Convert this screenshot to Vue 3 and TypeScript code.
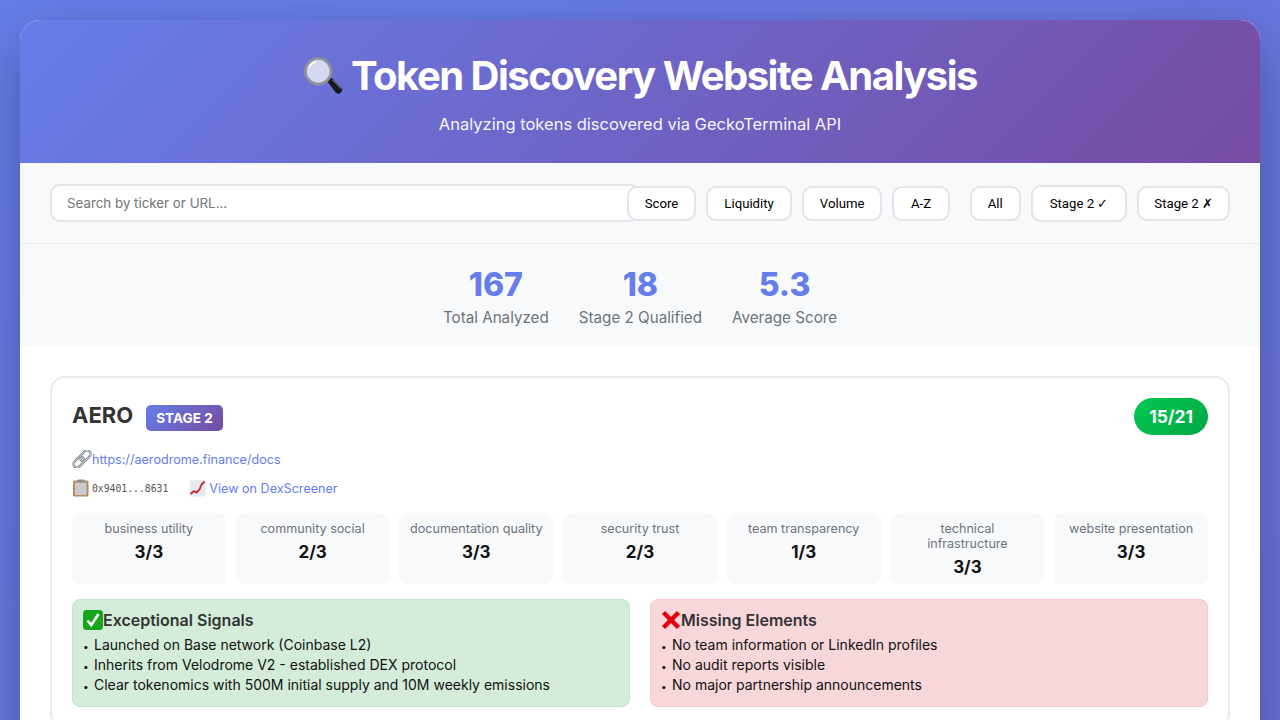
<script setup lang="ts">
const sorts = ['Score', 'Liquidity', 'Volume', 'A-Z']
const filters = ['All', 'Stage 2 ✓', 'Stage 2 ✗']
const stats = [
  { value: '167', label: 'Total Analyzed' },
  { value: '18', label: 'Stage 2 Qualified' },
  { value: '5.3', label: 'Average Score' }
]
const metrics = [
  { label: 'business utility', score: '3/3' },
  { label: 'community social', score: '2/3' },
  { label: 'documentation quality', score: '3/3' },
  { label: 'security trust', score: '2/3' },
  { label: 'team transparency', score: '1/3' },
  { label: 'technical infrastructure', score: '3/3' },
  { label: 'website presentation', score: '3/3' }
]
const signals = [
  'Launched on Base network (Coinbase L2)',
  'Inherits from Velodrome V2 - established DEX protocol',
  'Clear tokenomics with 500M initial supply and 10M weekly emissions'
]
const missing = [
  'No team information or LinkedIn profiles',
  'No audit reports visible',
  'No major partnership announcements'
]
</script>

<template>
  <div class="page">
    <div class="container">
      <header class="header">
        <h1>
          <svg class="emoji-title" viewBox="0 0 42 42" aria-hidden="true">
            <path d="M25 26l4-4 11 11c1.500 1.500 1.500 3 .5 4.500l-1.500 1.500c-1.500 1-3 1-4.500-.5z" fill="#16181c" />
            <path d="M31 25l9 9" stroke="#5b6068" stroke-width="1.500" fill="none" />
            <circle cx="16" cy="16" r="13.500" fill="#d5d8f0" stroke="#8e9299" stroke-width="3" />
            <path d="M6 13a11 11 0 0 1 8-7" stroke="#fff" stroke-width="1.500" fill="none" />
          </svg>
          Token Discovery Website Analysis
        </h1>
        <p>Analyzing tokens discovered via GeckoTerminal API</p>
      </header>

      <div class="controls">
        <input class="search" type="text" placeholder="Search by ticker or URL..." />
        <div class="group">
          <button v-for="s in sorts" :key="s" class="btn">{{ s }}</button>
        </div>
        <div class="group">
          <button v-for="f in filters" :key="f" class="btn" :class="{ active: f === 'Stage 2 ✓' }">{{ f }}</button>
        </div>
      </div>

      <div class="stats">
        <div v-for="s in stats" :key="s.label" class="stat">
          <div class="stat-value">{{ s.value }}</div>
          <div class="stat-label">{{ s.label }}</div>
        </div>
      </div>

      <div class="list">
        <div class="card">
          <div class="card-head">
            <div class="ticker">
              <h2>AERO</h2>
              <span class="stage">STAGE 2</span>
            </div>
            <span class="score">15/21</span>
          </div>

          <div class="url">
            <svg class="emoji" viewBox="0 0 20 18" aria-hidden="true">
              <g fill="none" transform="rotate(-45 10 9)">
                <rect x="-0.500" y="5.500" width="12" height="7" rx="3.500" stroke="#7d8590" stroke-width="2.400" />
                <rect x="-0.500" y="5.500" width="12" height="7" rx="3.500" stroke="#dfe3e8" stroke-width="0.800" />
                <rect x="8.500" y="5.500" width="12" height="7" rx="3.500" stroke="#7d8590" stroke-width="2.400" />
                <rect x="8.500" y="5.500" width="12" height="7" rx="3.500" stroke="#dfe3e8" stroke-width="0.800" />
              </g>
            </svg>
            <a href="#">https://aerodrome.finance/docs</a>
          </div>

          <div class="links">
            <span class="contract">
              <svg class="emoji" viewBox="0 0 20 18" aria-hidden="true">
                <rect x="1" y="1.500" width="15.500" height="16" rx="1.500" fill="#b98a5a" />
                <rect x="3" y="3.500" width="11.500" height="12.500" fill="#c9cacb" />
                <rect x="5" y="0.500" width="7.500" height="3" rx="1" fill="#8d9094" />
              </svg>
              <code>0x9401...8631</code>
            </span>
            <span class="dex">
              <svg class="emoji" viewBox="0 0 20 18" aria-hidden="true">
                <rect x="0.500" y="1" width="16" height="16.500" rx="1.500" fill="#e6e9ee" />
                <path d="M1.500 15l3.500-3 2.500 1.500 3-3 2-5 3-3" stroke="#c9242b" stroke-width="1.800" fill="none" />
              </svg>
              <a href="#">View on DexScreener</a>
            </span>
          </div>

          <div class="metrics">
            <div v-for="m in metrics" :key="m.label" class="metric">
              <div class="metric-label">{{ m.label }}</div>
              <div class="metric-score">{{ m.score }}</div>
            </div>
          </div>

          <div class="signals">
            <div class="box good">
              <h3>
                <svg class="emoji-h" viewBox="0 0 20 20" aria-hidden="true">
                  <rect width="20" height="20" rx="3.500" fill="#16a51c" />
                  <path d="M4.500 10.500l3.800 4.500 7.200-11" stroke="#fff" stroke-width="2.600" fill="none" />
                </svg>Exceptional Signals
              </h3>
              <ul>
                <li v-for="t in signals" :key="t">{{ t }}</li>
              </ul>
            </div>
            <div class="box bad">
              <h3>
                <svg class="emoji-h" viewBox="0 0 20 20" aria-hidden="true">
                  <path d="M2.500 2.500l15 15M17.500 2.500l-15 15" stroke="#e3000f" stroke-width="4.500" fill="none" />
                </svg>Missing Elements
              </h3>
              <ul>
                <li v-for="t in missing" :key="t">{{ t }}</li>
              </ul>
            </div>
          </div>
        </div>
      </div>
    </div>
  </div>
</template>

<style>
html,
body {
  margin: 0;
  overflow: hidden;
}
</style>

<style scoped>
.page {
  height: 720px;
  overflow: hidden;
  box-sizing: border-box;
  padding: 20px;
  background: linear-gradient(135deg, #667eea 0%, #764ba2 100%);
  background-size: 1280px 8000px;
  font-family: Inter, 'Liberation Sans', sans-serif;
  color: #333;
}
.container {
  border-radius: 20px;
  background: #fff;
  box-shadow: 0 20px 60px rgba(0, 0, 0, 0.3);
  overflow: hidden;
  min-height: 800px;
}
.header {
  background: linear-gradient(135deg, #667eea 0%, #764ba2 100%);
  color: #fff;
  text-align: center;
  padding: 30px;
  height: 143px;
  box-sizing: border-box;
}
.header h1 {
  margin: 0 0 11px;
  font-size: 40px;
  line-height: 52px;
  font-weight: 750;
  letter-spacing: -1.5px;
}
.emoji-title {
  width: 40px;
  height: 40px;
  vertical-align: -6px;
}
.header p {
  margin: 0;
  font-size: 16.500px;
  line-height: 22px;
  opacity: 0.95;
}
.controls {
  display: flex;
  align-items: center;
  padding: 20px 30px;
  height: 81px;
  box-sizing: border-box;
  background: #f8f9fa;
  border-bottom: 1px solid #e9ecef;
}
.search {
  width: 590px;
  height: 38px;
  box-sizing: border-box;
  margin-right: -13px;
  padding: 0 15px;
  border: 2px solid #e1e4e8;
  border-radius: 10px;
  background: #fff;
  font-family: inherit;
  font-size: 13.330px;
  outline: none;
}
.search::placeholder {
  color: #757575;
}
.group {
  display: flex;
  align-items: center;
  gap: 10px;
  margin-right: 20px;
  position: relative;
}
.group:last-child {
  margin-right: 0;
}
.btn {
  height: 35px;
  padding: 0 16px;
  border: 2px solid #e1e4e8;
  border-radius: 10px;
  background: #fff;
  color: #000;
  font-family: Roboto, sans-serif;
  font-size: 13.200px;
  white-space: nowrap;
}
.group:first-of-type .btn:last-child {
  padding: 0 16.500px;
}
.group:last-child .btn:last-child {
  padding: 0 15px;
}
.btn.active {
  height: 37px;
  padding: 0 17px;
}
.stats {
  display: flex;
  justify-content: center;
  gap: 30px;
  height: 102px;
  padding-top: 21px;
  box-sizing: border-box;
  background: #f8f9fa;
}
.stat {
  text-align: center;
}
.stat-value {
  font-size: 32px;
  line-height: 39px;
  font-weight: 800;
  color: #667eea;
}
.stat-label {
  font-size: 15.200px;
  line-height: 28px;
  color: #6c757d;
}
.list {
  padding: 30px;
}
.card {
  border: 2px solid #e9ecef;
  border-radius: 15px;
  padding: 20px;
  background: #fff;
}
.card-head {
  display: flex;
  justify-content: space-between;
  align-items: center;
  margin-bottom: 14px;
}
.ticker {
  display: flex;
  align-items: center;
  gap: 13px;
  padding-top: 2px;
}
.ticker h2 {
  margin: 0 0 6px;
  font-size: 22px;
  line-height: 28px;
  font-weight: 700;
}
.stage {
  padding: 0 10px;
  height: 26px;
  line-height: 26px;
  border-radius: 5px;
  background: linear-gradient(135deg, #667eea 0%, #764ba2 100%);
  color: #fff;
  font-size: 13.600px;
  font-weight: 700;
}
.score {
  height: 37px;
  line-height: 37px;
  padding: 0 15px;
  border-radius: 20px;
  background: linear-gradient(135deg, #00c851, #00a844);
  color: #fff;
  font-size: 17.400px;
  font-weight: 700;
}
.url {
  display: flex;
  align-items: center;
  height: 20px;
  margin-bottom: 9px;
  font-size: 12.600px;
}
.url a,
.dex a {
  color: #667eea;
  text-decoration: none;
}
.emoji {
  width: 20px;
  height: 18px;
  flex: none;
}
.links {
  display: flex;
  align-items: center;
  gap: 21px;
  height: 20px;
  margin-bottom: 15px;
  font-size: 12.600px;
}
.contract,
.dex {
  display: flex;
  align-items: center;
}
code {
  font-family: 'DejaVu Sans Mono', monospace;
  font-size: 9.750px;
  color: #555;
}
.metrics {
  display: grid;
  grid-template-columns: repeat(7, 1fr);
  gap: 10px;
  margin-bottom: 15px;
}
.metric {
  padding: 8px 8px 6px;
  border-radius: 8px;
  background: #f8f9fa;
  text-align: center;
}
.metric-label {
  font-size: 12.600px;
  line-height: 15px;
  color: #6c757d;
}
.metric-score {
  margin-top: 5px;
  font-size: 17px;
  line-height: 22px;
  font-weight: 700;
  color: #111;
}
.signals {
  display: grid;
  grid-template-columns: 1fr 1fr;
  gap: 20px;
}
.box {
  padding: 10px;
  border-radius: 8px;
  border: 1px solid;
}
.good {
  background: #d4edda;
  border-color: #c3e6cb;
}
.bad {
  background: #f8d7da;
  border-color: #f5c6cb;
}
.box h3 {
  display: flex;
  align-items: center;
  margin: 0 0 5px;
  font-size: 16px;
  line-height: 20px;
  font-weight: 600;
}
.emoji-h {
  width: 20px;
  height: 20px;
}
.box ul {
  list-style: none;
  margin: 0 0 1px;
  padding: 0;
}
.box li {
  font-size: 14px;
  line-height: 20px;
  color: #111;
}
.box li::before {
  content: '•';
  display: inline-block;
  width: 11px;
  font-size: 10px;
  line-height: 10px;
}
</style>
